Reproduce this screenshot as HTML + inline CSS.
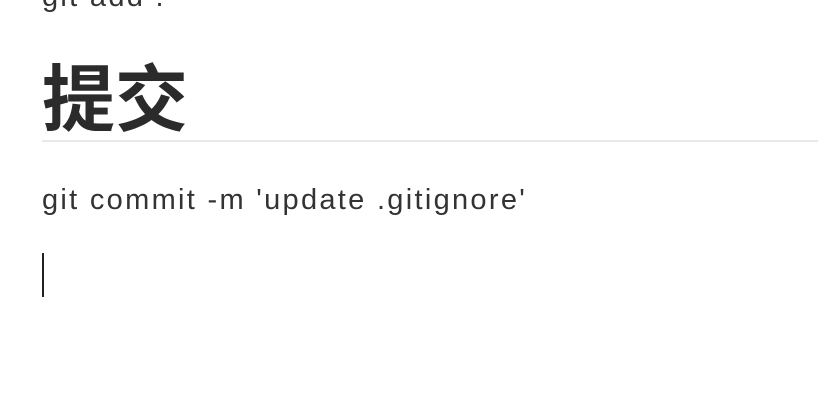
<!DOCTYPE html>
<html><head><meta charset="utf-8"><style>
body{margin:0;width:818px;height:410px;background:#fff;overflow:hidden;position:relative;font-family:"Liberation Sans","Noto Sans CJK SC",sans-serif;color:#333}
.t{position:absolute;left:42px;white-space:nowrap;font-size:29px;line-height:1;letter-spacing:2.3px}
h1{position:absolute;left:42px;top:54px;margin:0;font-size:73px;line-height:80px;font-weight:bold;font-family:"Noto Sans CJK SC",sans-serif;color:#2b2b2b}
.hr{position:absolute;left:42px;top:140px;width:776px;height:2px;background:#e8e8e8}
.cur{position:absolute;left:42px;top:253px;width:2px;height:44px;background:#222}
</style></head><body>
<div class="t" style="top:-17px">git add .</div>
<h1>提交</h1>
<div class="hr"></div>
<div class="t" style="top:186px">git commit -m 'update .gitignore'</div>
<div class="cur"></div>
</body></html>
